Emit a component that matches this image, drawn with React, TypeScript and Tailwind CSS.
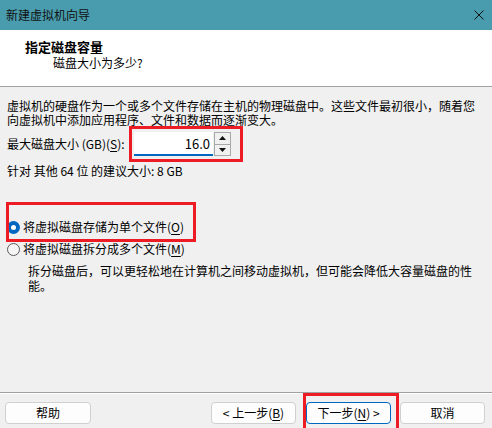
import React from "react";

/** Underlined access-key letter, as Windows dialogs draw it. */
function Key({ k }: { k: string }) {
  return <span className="underline underline-offset-2">{k}</span>;
}

function Radio({ checked }: { checked?: boolean }) {
  if (checked) {
    return (
      <span className="flex h-[13px] w-[13px] shrink-0 items-center justify-center rounded-full bg-[#0067c0]">
        <span className="h-[5px] w-[5px] rounded-full bg-white" />
      </span>
    );
  }
  return <span className="h-[13px] w-[13px] shrink-0 rounded-full border border-[#5a5a5a] bg-[#f5f5f5]" />;
}

function DialogButton({
  children,
  primary,
  className = "",
}: {
  children: React.ReactNode;
  primary?: boolean;
  className?: string;
}) {
  return (
    <button
      className={
        "flex h-[22px] items-center justify-center rounded-[4px] bg-[#fdfdfd] text-[12px] leading-none text-black " +
        (primary ? "border border-[#0067c0] " : "border border-[#d0d0d0] ") +
        className
      }
    >
      {children}
    </button>
  );
}

export default function App() {
  return (
    <div
      className="flex h-[428px] w-[492px] flex-col overflow-hidden bg-[#f0f0f0] text-[12px] text-black"
      style={{ fontFamily: '"Noto Sans CJK SC", "Noto Sans", sans-serif' }}
    >
      {/* Title bar */}
      <div className="flex h-[30px] shrink-0 items-center justify-between bg-[#489cad] pl-[6px] pr-[8px]">
        <span className="leading-none text-[#111]">新建虚拟机向导</span>
        <svg width="10" height="10" viewBox="0 0 10 10" className="text-[#111]">
          <path d="M0.5 0.5 L9.5 9.5 M9.5 0.5 L0.5 9.5" stroke="currentColor" strokeWidth="1" />
        </svg>
      </div>

      {/* Header */}
      <div className="h-[57px] shrink-0 border-b border-[#a0a0a0] bg-white pl-[25px] pt-[9px]">
        <div className="text-[13px] font-bold leading-[16px]">指定磁盘容量</div>
        <div className="pl-[28px] leading-[16px]">磁盘大小为多少?</div>
      </div>

      {/* Body */}
      <div className="flex flex-1 flex-col pl-[7px] pt-[12px]">
        <p className="whitespace-nowrap leading-[14px]">
          虚拟机的硬盘作为一个或多个文件存储在主机的物理磁盘中。这些文件最初很小，随着您
          <br />
          向虚拟机中添加应用程序、文件和数据而逐渐变大。
        </p>

        <div className="-mt-px flex items-center">
          <span className="w-[122px] whitespace-nowrap leading-none">
            最大磁盘大小 (GB)(<Key k="S" />):
          </span>
          <div className="flex h-[36px] w-[114px] items-center border-[3px] border-[#ed1c24] pl-[2px]">
            <div className="flex h-[24px] w-[79px] items-center justify-end border-b-2 border-[#0067c0] bg-white pr-[3px] text-[13px] leading-none">
              16.0
            </div>
            <div className="ml-px flex h-[24px] w-[17px] flex-col border border-[#a8a8a8] bg-[#f0f0f0]">
              <div className="flex flex-1 items-center justify-center border-b border-[#a8a8a8]">
                <svg width="7" height="4" viewBox="0 0 7 4">
                  <path d="M3.5 0 L7 4 L0 4 Z" fill="#111" />
                </svg>
              </div>
              <div className="flex flex-1 items-center justify-center">
                <svg width="7" height="4" viewBox="0 0 7 4">
                  <path d="M0 0 L7 0 L3.5 4 Z" fill="#111" />
                </svg>
              </div>
            </div>
          </div>
        </div>

        <div className="mt-[2px] leading-[14px]">针对 其他 64 位 的建议大小: 8 GB</div>

        <div className="relative mt-[41px]">
          <div className="pointer-events-none absolute left-[-1px] top-[-17px] h-[40px] w-[190px] border-[3px] border-[#ed1c24]" />
          <label className="flex h-[16px] items-center gap-[3px]">
            <Radio checked />
            <span className="leading-none">
              将虚拟磁盘存储为单个文件(<Key k="O" />)
            </span>
          </label>
          <label className="mt-[6px] flex h-[16px] items-center gap-[3px]">
            <Radio />
            <span className="leading-none">
              将虚拟磁盘拆分成多个文件(<Key k="M" />)
            </span>
          </label>
        </div>

        <p className="mt-[6px] whitespace-nowrap pl-[21px] leading-[15px]">
          拆分磁盘后，可以更轻松地在计算机之间移动虚拟机，但可能会降低大容量磁盘的性
          <br />
          能。
        </p>
      </div>

      {/* Footer */}
      <div className="relative h-[36px] shrink-0 border-t border-[#a0a0a0]">
        <div className="h-px bg-white" />
        <div className="flex pl-[5px] pt-[8px]">
          <DialogButton className="w-[86px]">帮助</DialogButton>
          <DialogButton className="ml-[120px] w-[85px]">
            &lt; 上一步(<Key k="B" />)
          </DialogButton>
          <DialogButton primary className="ml-[10px] w-[85px]">
            下一步(<Key k="N" />) &gt;
          </DialogButton>
          <DialogButton className="ml-[9px] w-[85px]">取消</DialogButton>
        </div>
        <div className="pointer-events-none absolute left-[303px] top-0 h-[40px] w-[96px] border-[3px] border-[#ed1c24]" />
      </div>
    </div>
  );
}
